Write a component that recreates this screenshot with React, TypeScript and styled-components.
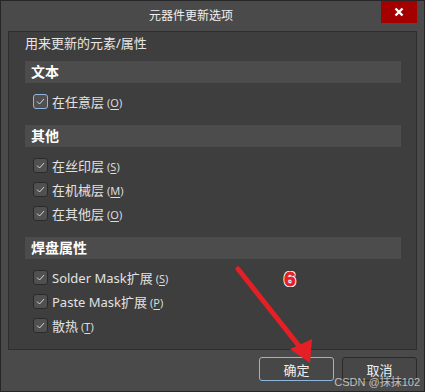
import * as React from 'react'
import styled, { createGlobalStyle } from 'styled-components'

const GlobalStyle = createGlobalStyle`
  html, body {
    margin: 0;
    padding: 0;
    background: #2b2b2b;
  }
  body {
    font-family: 'Noto Sans', 'Noto Sans CJK SC', sans-serif;
  }
`

const Window = styled.div`
  position: relative;
  width: 425px;
  height: 392px;
  box-sizing: border-box;
  border: 1px solid #262626;
  background: #4a4a4a;
  display: flex;
  flex-direction: column;
  overflow: hidden;
`

const TitleBar = styled.div`
  height: 30px;
  display: flex;
  align-items: flex-start;
`

const Title = styled.div`
  flex: 1;
  text-align: center;
  color: #f0f0f0;
  font-size: 12px;
  line-height: 30px;
`

const CloseButton = styled.div`
  width: 36px;
  height: 22px;
  background: #a40000;
  margin-right: 7px;
  display: flex;
  align-items: center;
  justify-content: center;
`

const Panel = styled.div`
  margin: 0 7px 0 7px;
  height: 319px;
  box-sizing: border-box;
  border: 1px solid #2e2e2e;
  background: #3e3e3e;
  padding: 4px 15px 0 16px;
`

const PanelCaption = styled.div`
  color: #e6e6e6;
  font-size: 13px;
  line-height: 15px;
  margin-bottom: 10px;
`

const Section = styled.div`
  margin-bottom: 12px;
`

const SectionHeader = styled.div`
  height: 22px;
  background: #4c4c4c;
  color: #ffffff;
  font-weight: 700;
  font-size: 14px;
  line-height: 22px;
  padding-left: 6px;
  margin-bottom: 6px;
`

const Row = styled.div`
  display: flex;
  align-items: center;
  height: 24px;
  padding-left: 8px;
  gap: 4px;
  color: #e2e2e2;
  font-size: 13px;
`

const Box = styled.div<{ $focus?: boolean }>`
  width: 15px;
  height: 15px;
  box-sizing: border-box;
  border-radius: 3px;
  border: 1px solid ${(p) => (p.$focus ? '#8fb6dd' : '#2a2a2a')};
  background: #505050;
  display: flex;
  align-items: center;
  justify-content: center;
`

const Hotkey = styled.span`
  font-size: 11px;
  margin-left: 3px;
  color: #dcdcdc;
  u {
    text-underline-offset: 2px;
  }
`

const Footer = styled.div`
  flex: 1;
  display: flex;
  justify-content: flex-end;
  align-items: flex-start;
  gap: 8px;
  padding: 7px 7px 0 0;
`

const Button = styled.div<{ $primary?: boolean }>`
  width: 75px;
  height: 24px;
  box-sizing: border-box;
  border-radius: 3px;
  border: 1px solid ${(p) => (p.$primary ? '#8fb6dd' : '#2a2a2a')};
  background: #474747;
  color: #f0f0f0;
  font-size: 13px;
  display: flex;
  align-items: center;
  justify-content: center;
`

const Annotation = styled.svg`
  position: absolute;
  left: 0;
  top: 0;
  pointer-events: none;
`

const StepNumber = styled.div`
  position: absolute;
  left: 283px;
  top: 266px;
  font-family: 'Liberation Sans', sans-serif;
  font-weight: 700;
  font-size: 21px;
  color: #e41f25;
  -webkit-text-stroke: 0.8px #e41f25;
  text-shadow: 1px 0 0 #fff, -1px 0 0 #fff, 0 1px 0 #fff, 0 -1px 0 #fff, 1px 1px 0 #fff, -1px -1px 0 #fff, 1px -1px 0 #fff, -1px 1px 0 #fff;
`

const Watermark = styled.div`
  position: absolute;
  right: 4px;
  bottom: 2px;
  font-family: 'Liberation Sans', 'Noto Sans CJK SC', sans-serif;
  font-size: 11px;
  color: rgba(230, 230, 230, 0.75);
`

const Check = ({ focus }: { focus?: boolean }) => (
  <Box $focus={focus}>
    <svg width="9" height="7" viewBox="0 0 9 7">
      <path d="M1 3.5 L3.5 6 L8 1" fill="none" stroke="#d6d6d6" strokeWidth="1" />
    </svg>
  </Box>
)

interface OptionProps {
  label: string
  hotkey: string
  focus?: boolean
}

const Option = ({ label, hotkey, focus }: OptionProps) => (
  <Row>
    <Check focus={focus} />
    <span>
      {label}
      <Hotkey>
        (<u>{hotkey}</u>)
      </Hotkey>
    </span>
  </Row>
)

export default function App() {
  return (
    <>
      <GlobalStyle />
      <Window>
        <TitleBar>
          <Title>元器件更新选项</Title>
          <CloseButton>
            <svg width="10" height="10" viewBox="0 0 10 10">
              <path d="M1.5 1.5 L8.5 8.5 M8.5 1.5 L1.5 8.5" stroke="#fff" strokeWidth="2.4" />
            </svg>
          </CloseButton>
        </TitleBar>
        <Panel>
          <PanelCaption>用来更新的元素/属性</PanelCaption>
          <Section>
            <SectionHeader>文本</SectionHeader>
            <Option label="在任意层" hotkey="O" focus />
          </Section>
          <Section>
            <SectionHeader>其他</SectionHeader>
            <Option label="在丝印层" hotkey="S" />
            <Option label="在机械层" hotkey="M" />
            <Option label="在其他层" hotkey="O" />
          </Section>
          <Section>
            <SectionHeader>焊盘属性</SectionHeader>
            <Option label="Solder Mask扩展" hotkey="S" />
            <Option label="Paste Mask扩展" hotkey="P" />
            <Option label="散热" hotkey="T" />
          </Section>
        </Panel>
        <Footer>
          <Button $primary>确定</Button>
          <Button>取消</Button>
        </Footer>
        <Annotation width="425" height="392">
          <line x1="237" y1="268" x2="302" y2="350" stroke="#e41f25" strokeWidth="5" strokeLinecap="round" />
          <polygon points="289,348 311,338 309,362" fill="#e41f25" />
        </Annotation>
        <StepNumber>6</StepNumber>
        <Watermark>CSDN @抹抹102</Watermark>
      </Window>
    </>
  )
}
